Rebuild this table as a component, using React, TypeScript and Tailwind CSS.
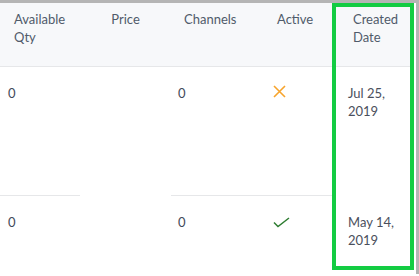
const rows = [
  { qty: '0', channels: '0', active: false, date: ['Jul 25,', '2019'] },
  { qty: '0', channels: '0', active: true, date: ['May 14,', '2019'] },
];

function Cross() {
  return (
    <svg width="13" height="13" viewBox="0 0 13 13" className="mt-[1px]">
      <path d="M1 1 12 12M12 1 1 12" stroke="#f7a42c" strokeWidth="1.6" fill="none" />
    </svg>
  );
}

function Check() {
  return (
    <svg width="17" height="11" viewBox="0 0 17 11" className="mt-[4px]">
      <path d="M1 5.5 5 9.5 16 1" stroke="#2f7d32" strokeWidth="1.5" fill="none" />
    </svg>
  );
}

export default function App() {
  return (
    <div className="h-[276px] w-[419px] bg-white font-['Lato',sans-serif] text-[13px] leading-[18px]">
      <div className="flex h-[274px] border-t-[3px] border-r-[3px] border-[#b5b5b5]">
        <div className="flex w-[332px] flex-col">
          <div className="flex h-[64px] border-b border-[#e6e7e9] bg-[#f7f8fa] pt-[7px] text-[#505b6a]">
            <div className="w-[80px] pl-[14px]">
              Available
              <br />
              Qty
            </div>
            <div className="w-[91px] text-center">Price</div>
            <div className="w-[94px] pl-[13px]">Channels</div>
            <div className="w-[67px] pl-[12px]">Active</div>
          </div>
          {rows.map((row, i) => (
            <div key={i} className={`flex text-[#3f4a5a] ${i === 0 ? 'h-[129px]' : 'flex-1'}`}>
              <div className={`w-[80px] pl-2 pt-[17px] ${i === 0 ? 'border-b border-[#e6e7e9]' : ''}`}>
                {row.qty}
              </div>
              <div className="w-[91px]" />
              <div
                className={`flex w-[161px] pt-[17px] ${i === 0 ? 'border-b border-[#e6e7e9]' : ''}`}
              >
                <div className="w-[94px] pl-[7px]">{row.channels}</div>
                <div className="w-[67px] pl-2">{row.active ? <Check /> : <Cross />}</div>
              </div>
            </div>
          ))}
        </div>
        <div className="flex h-[267px] w-[82px] flex-col border-4 border-[#13cc42]">
          <div className="h-[60px] border-b border-[#e6e7e9] bg-[#f7f8fa] pl-[17px] pt-[3px] text-[#505b6a]">
            Created
            <br />
            Date
          </div>
          {rows.map((row, i) => (
            <div key={i} className={`pl-[12px] pt-[17px] text-[#4a4f5c] ${i === 0 ? 'h-[129px]' : 'flex-1'}`}>
              {row.date[0]}
              <br />
              {row.date[1]}
            </div>
          ))}
        </div>
      </div>
    </div>
  );
}
